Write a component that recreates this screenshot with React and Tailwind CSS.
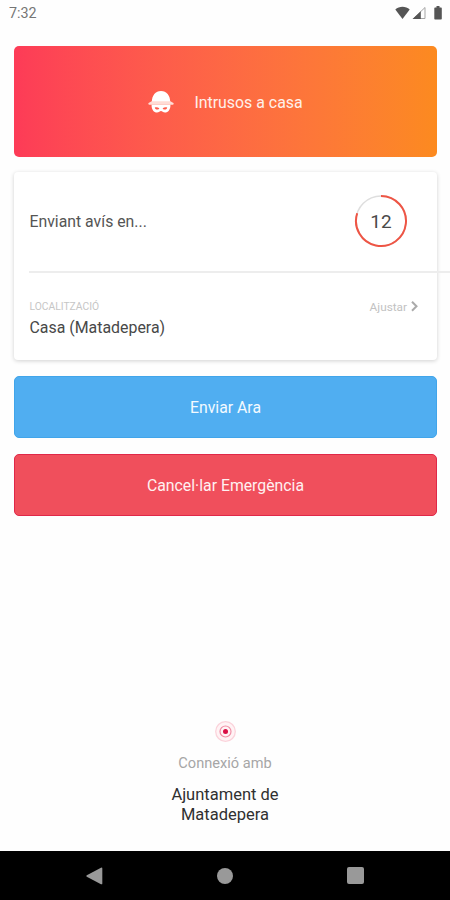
function StatusBar() {
  return (
    <header className="flex h-[46px] items-start justify-between pt-[5px] pr-[5px] pl-[9px]">
      <span className="text-[14.3px] leading-[17px] text-[#757575]">7:32</span>
      <div className="flex items-start pt-px text-[#555]">
        <svg width="15" height="14" viewBox="0 0 15 14" fill="currentColor">
          <path d="M.3 3.500C4.200-.3 10.800-.3 14.700 3.500L7.500 13z" />
        </svg>
        <svg className="ml-[2px]" width="14" height="14" viewBox="0 0 14 14">
          <path d="M13 1.500V12.500H1.500z" fill="none" stroke="#a5a5a5" strokeWidth="1" />
          <path d="M8.800 5.200V13H.5z" fill="currentColor" />
        </svg>
        <svg className="ml-[5px]" width="14" height="14" viewBox="0 0 14 14" fill="currentColor">
          <path d="M5.500 0h3v1.500h1.300c.6 0 1 .4 1 1V12.500c0 .6-.4 1-1 1H4.300c-.6 0-1-.4-1-1V2.500c0-.6.4-1 1-1h1.200z" />
        </svg>
      </div>
    </header>
  );
}

function IntruderIcon() {
  return (
    <svg width="26" height="24" viewBox="0 0 26 24">
      <path d="M3.800 12C3.800 5.500 7.500 1 13 1s9.200 4.500 9.200 11z" fill="#fff" />
      <path d="M3.600 11.200h18.800l3 1.800c.6.600.2 1.700-.6 1.700H1.200c-.8 0-1.200-1.100-.6-1.700z" fill="#ffdcd5" />
      <path
        fillRule="evenodd"
        d="M3.600 14.700h18.800c.3 4.800-2.400 7.900-5.400 7.900-1.900 0-2.900-1.500-4-1.500s-2.100 1.500-4 1.500c-3 0-5.700-3.100-5.400-7.900zM6.800 17.400c.2 1.500 1.400 2.300 2.800 2.100 1-.1 1.600-.7 1.700-1.300C10 17.100 8.400 16.900 6.800 17.400zM19.200 17.400c-1.600-.5-3.200-.3-4.500.8.1.6.700 1.200 1.700 1.300 1.400.2 2.600-.6 2.800-2.100z"
        fill="#fff"
      />
    </svg>
  );
}

function Countdown({ seconds }) {
  return (
    <div className="grid h-[54px] w-[54px] place-items-center">
      <svg className="col-start-1 row-start-1" width="54" height="54" viewBox="0 0 54 54" fill="none">
        <circle cx="27" cy="26" r="25" stroke="#dedede" strokeWidth="1.500" />
        <path d="M27 1A25 25 0 1 1 3.200 18.300" stroke="#ee5545" strokeWidth="2" />
      </svg>
      <span className="col-start-1 row-start-1 text-[19px] leading-6 text-[#4a4a4a]">{seconds}</span>
    </div>
  );
}

function NavBar() {
  return (
    <nav className="flex h-[49px] items-center justify-between bg-black pr-[86px] pl-[85px]">
      <svg width="18" height="18" viewBox="0 0 18 18" fill="#999">
        <path d="M1.800 8.300 16 .7q1.300-.5 1.300.8v15q0 1.200-1.300.7L1.800 9.700q-1.200-.7 0-1.400z" />
      </svg>
      <span className="h-[16px] w-[16px] rounded-full bg-[#999]" />
      <span className="h-[17px] w-[17px] rounded-[2px] bg-[#999]" />
    </nav>
  );
}

export default function App() {
  return (
    <div className="flex h-[900px] w-[450px] flex-col overflow-hidden bg-[#fefefe] font-[Roboto,sans-serif]">
      <StatusBar />
      <main className="flex flex-1 flex-col">
        <div className="mr-[13px] ml-[14px] flex h-[111px] items-center justify-center rounded-[5px] bg-linear-to-r from-[#fd3b57] to-[#fc8a1f]">
          <div className="flex items-center gap-[20px]">
            <IntruderIcon />
            <span className="pt-[2px] text-[15.9px] leading-5 text-[#fff0ea]">Intrusos a casa</span>
          </div>
        </div>

        <section className="mt-[15px] ml-[14px] flex h-[188px] w-[436px] flex-col">
          <div className="flex h-[188px] w-[423px] flex-col rounded-[4px] bg-white shadow-[0_1px_4px_rgba(0,0,0,0.18)]">
            <div className="flex h-[99px] items-center justify-between pr-[29px] pl-[15.500px]">
              <span className="text-[15.8px] leading-5 text-[#555]">Enviant avís en...</span>
              <Countdown seconds={12} />
            </div>
            <hr className="ml-[15px] h-[2px] w-[421px] shrink-0 border-0 bg-[#ededed]" />
            <div className="flex items-start justify-between pt-[27px] pr-[18px] pl-[15.500px]">
              <div className="flex flex-col">
                <span className="text-[10.3px] leading-[14px] text-[#c6c6c6]">LOCALITZACIÓ</span>
                <span className="mt-[4px] text-[15.9px] leading-5 text-[#484848]">Casa (Matadepera)</span>
              </div>
              <div className="-mt-px flex items-center gap-[3px] text-[#c2c2c2]">
                <span className="text-[11.8px] leading-4">Ajustar</span>
                <svg width="9" height="12" viewBox="0 0 9 12" fill="none" stroke="#aaa" strokeWidth="2">
                  <path d="M2 .8 6.500 5.300 2 9.800" />
                </svg>
              </div>
            </div>
          </div>
        </section>

        <button className="mt-[16px] mr-[13px] ml-[14px] h-[62px] rounded-[5px] border border-[#41a5ea] bg-[#50aef1] pt-[2px] text-[15.8px] leading-5 text-[#f3faff]">
          Enviar Ara
        </button>
        <button className="mt-[16px] mr-[13px] ml-[14px] h-[62px] rounded-[5px] border border-[#e02848] bg-[#f04f5c] pt-[2px] text-[15.8px] leading-5 text-[#fff1f1]">
          Cancel·lar Emergència
        </button>

        <footer className="mt-auto flex flex-col items-center pb-[26px] text-center">
          <svg width="22" height="22" viewBox="0 0 22 22" fill="none">
            <circle cx="11.500" cy="11.500" r="9.800" fill="#fff3f5" stroke="#fbd3db" strokeWidth="1.300" />
            <circle cx="11.500" cy="11.500" r="5.500" stroke="#f08fa5" strokeWidth="1.200" />
            <circle cx="11.500" cy="11.500" r="2.500" fill="#d90f45" />
          </svg>
          <p className="mt-[11px] text-[14.6px] leading-5 text-[#a6a6a6]">Connexió amb</p>
          <p className="mt-[12px] text-[16.5px] leading-[20px] text-[#303030]">
            Ajuntament de
            <br />
            Matadepera
          </p>
        </footer>
      </main>
      <NavBar />
    </div>
  );
}
